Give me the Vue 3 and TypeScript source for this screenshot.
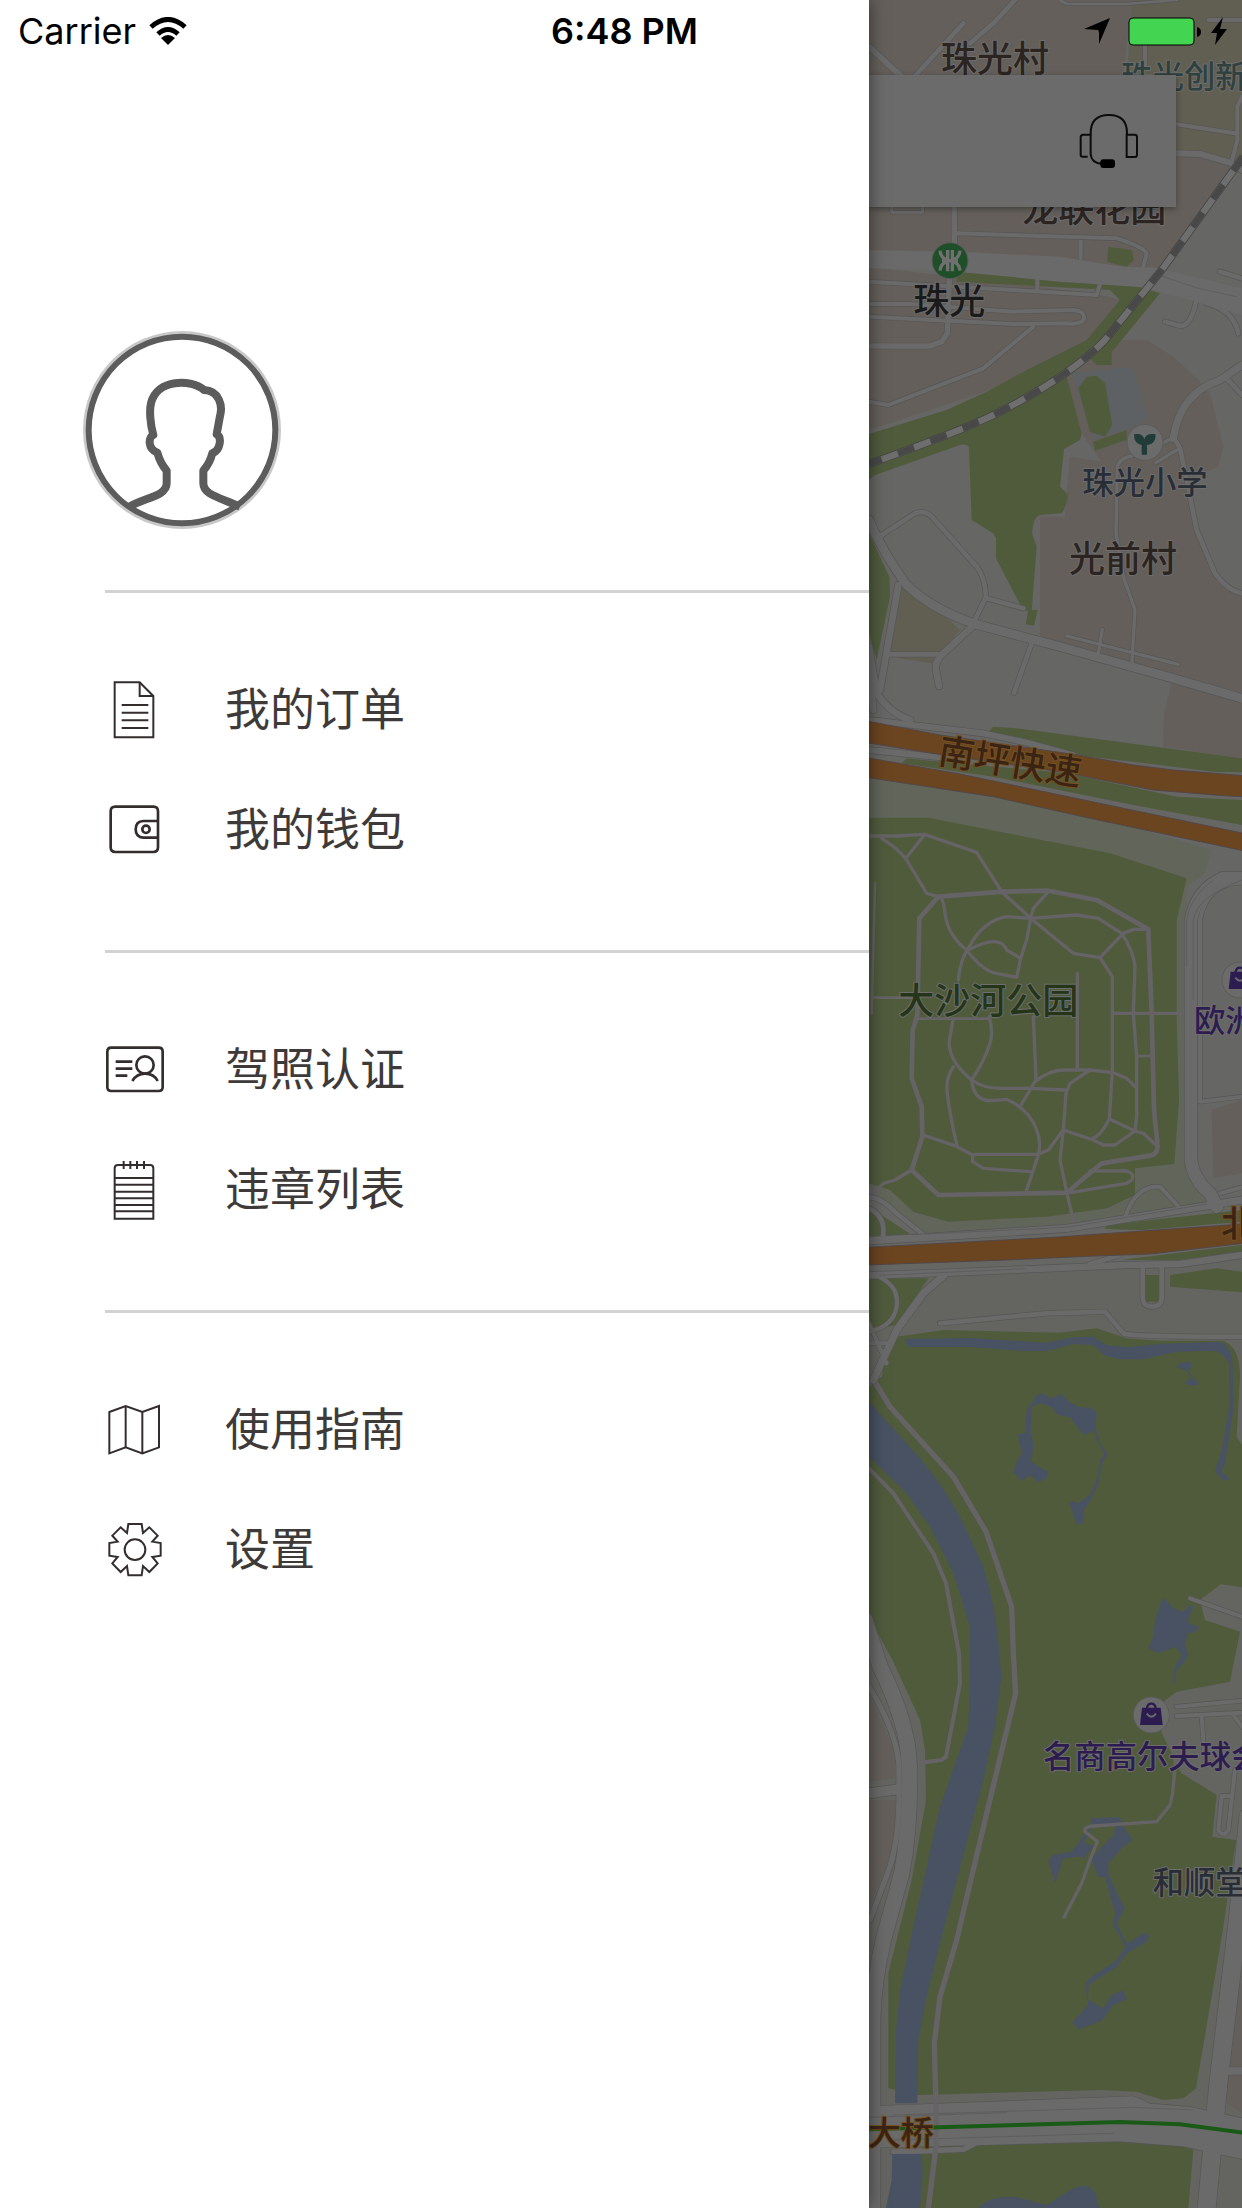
<script setup lang="ts">
interface Road {
  w: number
  d: string
}

interface Label {
  text: string
  x: number
  y: number
  kind: string
  turn?: string
}

interface MenuItem {
  label: string
  icon: string[]
  weight: number
}

const menu: MenuItem[][] = [
  [
    {
      label: '我的订单',
      weight: 6,
      icon: ['M32 7H107L148 48V172H32Z', 'M107 7V48H148', 'M53 75H133M53 98H133M53 121H133M53 144H133'],
    },
    {
      label: '我的钱包',
      weight: 8,
      icon: [
        'M34 20H148Q162 20 162 34V142Q162 156 148 156H34Q20 156 20 142V34Q20 20 34 20Z',
        'M162 63H118Q95 64 95 88Q95 112 118 113H162',
        'M126 77A11 11 0 1 1 126 99A11 11 0 1 1 126 77Z',
      ],
    },
  ],
  [
    {
      label: '驾照认证',
      weight: 8,
      icon: [
        'M22 23H164Q176 23 176 35V141Q176 153 164 153H22Q10 153 10 141V35Q10 23 22 23Z',
        'M35 65H85M35 86H85M35 107H70',
        'M123 49A26 26 0 1 1 123 101A26 26 0 1 1 123 49Z',
        'M85 123Q98 101 123 101Q150 101 161 123',
      ],
    },
    {
      label: '违章列表',
      weight: 6,
      icon: [
        'M42 15H138Q148 15 148 25V176H32V25Q32 15 42 15Z',
        'M32 54H148M32 74H148M32 95H148M32 115H148M32 135H148M32 154H148',
        'M59 3V27M79 3V27M99 3V27M120 3V27',
      ],
    },
  ],
  [
    {
      label: '使用指南',
      weight: 6,
      icon: ['M16 36L65 18L115 36L165 18V142L115 160L65 142L16 160Z', 'M65 18V142M115 36V160'],
    },
    {
      label: '设置',
      weight: 6,
      icon: [
        'M73 12H113L117 39L136 22L161 47L145 65L170 69V107L145 111L161 130L136 156L117 138L113 166H73L69 138L50 156L25 130L41 111L16 107V69L41 65L25 47L50 22L69 39Z',
        'M93 58A31 31 0 1 1 93 120A31 31 0 1 1 93 58Z',
      ],
    },
  ],
]

const roads: Road[] = [
  { w: 14, d: 'M465 0L400 70L330 130M310 70L165 228' },
  { w: 18, d: 'M27 140L125 230' },
  { w: 8, d: 'M600 0L620 12H800L950 0M95 620V637H188V620' },
  { w: 12, d: 'M855 135V200M1045 60H1146M945 372L1125 400M1146 290L1132 320V420L1115 485' },
  { w: 18, d: 'M940 460L1020 462L1110 488L1146 510' },
  { w: 16, d: 'M283 615V760M268 840L262 1000L245 1025L210 1038H27' },
  { w: 12, d: 'M290 700L770 715Q850 740 860 760L850 800M662 715V775M532 820V870M27 845L290 860L710 885L722 845' },
  { w: 12, d: 'M27 912H150L460 935L640 930Q680 935 670 960Q655 975 620 970L460 972L27 950M520 980L370 1105L85 1215L27 1205' },
  { w: 14, d: 'M1008 905Q990 990 950 975L915 965M1080 815L1146 835M1040 910Q1120 930 1135 1000' },
  { w: 14, d: 'M65 1605L165 1540Q195 1530 215 1550L350 1700Q375 1730 378 1790L340 1870M380 1795L490 1825M85 1963H245M515 1930L462 2078' },
  { w: 20, d: 'M345 1872L245 1965Q225 1985 228 2010L237 2058M115 1755L60 2070' },
  { w: 20, d: 'M27 1940L50 2080Q90 2140 150 2160M27 2000L40 2130' },
  { w: 26, d: 'M27 1560Q70 1660 140 1755Q220 1830 345 1872L600 1940L940 2035L1146 2095' },
  { w: 10, d: 'M620 1908L955 1993M727 1888L715 1960M815 2000L825 1830L790 1730L768 1600L772 1400Q780 1370 830 1365L945 1312M888 1388L950 1350' },
  { w: 14, d: 'M940 1310L960 1345L980 1440L1010 1590L1065 1720Q1100 1770 1146 1780M1100 1135L1146 1185' },
  { w: 22, d: 'M940 1315Q960 1180 1080 1140L1146 1095' },
  { w: 18, d: 'M27 2160L370 2200L500 2228L640 2266M27 2250L240 2272' },
  { w: 38, d: 'M1146 2634H1090Q1010 2670 993 2760V3480Q1000 3540 1050 3580L1070 3620' },
  { w: 12, d: 'M1146 2648Q1040 2650 1020 2760V3305L1146 3290' },
  { w: 12, d: 'M795 3655Q820 3570 880 3560H900L960 3625M1080 3580L1146 3562' },
  { w: 22, d: 'M27 3722L200 3712L620 3685L1146 3600' },
  { w: 14, d: 'M27 3592Q60 3590 110 3640L200 3712M27 3625Q80 3650 68 3715' },
  { w: 20, d: 'M27 3826L260 3818L800 3795L960 3792L1146 3765' },
  { w: 14, d: 'M690 3792L780 3765M848 3797V3895Q850 3920 875 3920Q905 3920 905 3895V3797M240 3970L560 3940L735 3935L790 4000Q810 4010 1146 4010' },
  { w: 12, d: 'M60 3832Q118 3860 110 3920Q100 3980 27 3995M27 3970L80 4090M27 4030H80' },
  { w: 22, d: 'M250 3828L190 3880L110 3990L40 4140' },
  { w: 12, d: 'M990 4795L1060 4820L1146 4850M950 5120L1146 5102M950 5148L1146 5138M1025 5148L1033 5260M1120 5145L1146 5180M1125 5310L1105 5490Q1090 5515 1075 5490L1085 5388H1110' },
  { w: 30, d: 'M27 5380L130 5366' },
  { w: 16, d: 'M27 5060Q112 5200 117 5300V5400Q115 5520 90 5600L30 5760' },
  { w: 46, d: 'M15 4860L60 5000Q145 5170 148 5300Q152 5480 125 5620L70 5820Q40 5950 38 6060V6624' },
  { w: 54, d: 'M1165 5450L1130 5790L1075 6250L1040 6624' },
  { w: 22, d: 'M1146 6213H1100M27 6330L820 6300Q850 6310 900 6345' },
  { w: 120, d: 'M27 6383L400 6374L780 6364L980 6380L1165 6420' },
  { w: 16, d: 'M100 6456L310 6448L350 6428' },
]

const trails: Road[] = [
  { w: 10, d: 'M27 2508H110L193 2503L350 2557L425 2675L512 2755L640 2860L720 2873L790 2800L822 2788H865' },
  { w: 10, d: 'M65 2515Q120 2550 140 2580L200 2680L235 2690M193 2505L140 2572' },
  { w: 14, d: 'M235 2690L430 2675L565 2672L710 2700L865 2788L875 3040L882 3330L893 3440Q890 3465 870 3467L725 3490L620 3578L235 3585L155 3510L187 3410L185 3320L155 3235L158 3090L172 3045L178 2755Z' },
  { w: 10, d: 'M235 2690Q250 2690 255 2740Q265 2810 320 2850Q370 2915 410 2920L470 2932L482 2875L500 2820L512 2755L520 2725L565 2675' },
  { w: 10, d: 'M295 2940Q300 2880 325 2845Q370 2760 440 2750L512 2755L650 2745L715 2755L785 2800Q820 2850 825 2900L820 3040L830 3170V3350L825 3393' },
  { w: 10, d: 'M325 2850Q420 2800 440 2850L482 2875M720 2873L757 2930V3210L748 3358Q720 3410 695 3417M757 3040H975M652 2920V3210' },
  { w: 8, d: 'M45 2650L35 3040M40 2993H170M172 3056H385M830 3168H870' },
  { w: 10, d: 'M280 3056L268 3120Q262 3180 335 3240Q370 3265 420 3265L510 3265L615 3270' },
  { w: 10, d: 'M388 3050Q400 3100 390 3130Q375 3180 335 3240Q340 3300 390 3302L440 3298Q510 3330 530 3390Q545 3430 535 3465L500 3570' },
  { w: 10, d: 'M520 3050L528 3240M483 3315L525 3245Q570 3210 610 3210L690 3210L760 3218L800 3235L825 3260' },
  { w: 10, d: 'M690 3210L630 3250L618 3280L610 3390L565 3450L535 3463H340M280 3200Q255 3240 262 3280Q270 3350 292 3440' },
  { w: 10, d: 'M190 3405L292 3440L338 3465V3485L370 3505L510 3515M610 3390L600 3480L620 3575L642 3670' },
  { w: 10, d: 'M610 3390L700 3420L730 3435H765L825 3393L750 3358M825 3393L850 3400L893 3440' },
  { w: 10, d: 'M690 3513H800Q825 3520 815 3540L800 3550L630 3578M155 3510L105 3540L70 3550L35 3585' },
  { w: 16, d: 'M35 4130L90 4220L280 4430L378 4595L455 4820L460 4960L467 5080L380 5440L290 5820L240 5990L223 6130L228 6320V6440L205 6624' },
  { w: 12, d: 'M27 4405L100 4480L220 4660L258 4750L297 4960L300 5050L258 5270L245 5280L170 5290' },
  { w: 10, d: 'M945 5148V5300L938 5380L930 5415L890 5465L700 5478Q670 5480 675 5495L712 5525L690 5580L665 5650L612 5752' },
]

const labels: Label[] = [
  { text: '珠光村', x: 243, y: 215, kind: 'large brown' },
  { text: '珠光创新', x: 784, y: 264, kind: 'small teal' },
  { text: '龙联花园', x: 487, y: 667, kind: 'large brown' },
  { text: '珠光', x: 160, y: 943, kind: 'large black' },
  { text: '珠光小学', x: 667, y: 1483, kind: 'small slate' },
  { text: '光前村', x: 627, y: 1715, kind: 'large brown' },
  { text: '南坪快速', x: 231, y: 2290, kind: 'large amber', turn: 'rotate(9 231 2290)' },
  { text: '大沙河公园', x: 115, y: 3042, kind: 'large forest' },
  { text: '欧洲城', x: 1002, y: 3095, kind: 'small violet' },
  { text: '北环大道', x: 1083, y: 3711, kind: 'large amber' },
  { text: '名商高尔夫球会', x: 549, y: 5303, kind: 'small violet' },
  { text: '和顺堂', x: 878, y: 5682, kind: 'small slate' },
  { text: '大桥', x: 23, y: 6436, kind: 'bridge amber' },
]
</script>

<template>
  <div class="app">
    <header class="status">
      <div class="carrier">
        <span>Carrier</span>
        <svg class="wifi" viewBox="0 0 38 28" aria-hidden="true">
          <path d="M2 10Q19 -5 36 10" stroke-width="5" />
          <path d="M9 17Q19 8 29 17" stroke-width="5" />
          <path class="solid" d="M19 28L12 21Q19 15 26 21Z" />
        </svg>
      </div>
      <time class="clock">6:48 PM</time>
      <div class="indicators">
        <svg class="arrow" viewBox="0 0 26 26" aria-hidden="true"><path d="M26 0L15 26V14L14 12L0 11Z" /></svg>
        <svg class="battery" viewBox="0 0 73 29" aria-hidden="true">
          <rect x="1" y="1" width="65" height="27" rx="4" fill="#43d552" stroke="#000" stroke-width="1" />
          <path d="M69 10Q73 11 73 15Q73 19 69 20Z" />
        </svg>
        <svg class="bolt" viewBox="0 0 16 28" aria-hidden="true"><path d="M12 0L0 16H6L4 28L16 12H9Z" /></svg>
      </div>
    </header>

    <aside class="drawer">
      <div class="profile">
        <svg class="avatar" viewBox="69 63 594 594" role="img" aria-label="avatar">
          <circle cx="366" cy="360" r="297" fill="#c8c8c8" />
          <circle cx="366" cy="360" r="280" fill="#fff" stroke="#5c5c5c" stroke-width="18" />
          <path
            d="M205 592C250 563 320 560 320 520V482C305 465 298 450 292 428C262 415 265 382 280 375C270 340 268 300 273 280C290 205 395 207 432 240C480 242 488 290 480 318L470 373C486 382 482 420 457 430C452 450 445 465 430 482V520C430 555 480 562 540 590"
            fill="none"
            stroke="#5c5c5c"
            stroke-width="24"
            stroke-linejoin="round"
          />
        </svg>
      </div>
      <nav>
        <ul v-for="(group, g) in menu" :key="g" class="group">
          <li v-for="item in group" :key="item.label">
            <a href="#" class="item">
              <svg class="icon" viewBox="0 0 180 180" :stroke-width="item.weight" aria-hidden="true">
                <path v-for="(d, i) in item.icon" :key="i" :d="d" />
              </svg>
              <span>{{ item.label }}</span>
            </a>
          </li>
        </ul>
      </nav>
    </aside>

    <main class="map-pane">
      <svg class="map" viewBox="27 0 1119 6624" preserveAspectRatio="xMinYMin slice">
        <rect x="27" width="1119" height="6624" fill="#666664" />
        <g fill="#645f5a">
          <path d="M27 0H815L790 225V450H950L1120 500L900 815L27 760Z" />
          <path d="M27 800L700 880L780 900L690 1020L600 1090L330 1190L27 1290Z" />
          <path d="M620 1130L715 1020H860L940 1070L1015 1140L1050 1180L1090 1340L1075 1400L980 1440L1000 1590L1065 1720L1146 1790V2275L910 2240L912 2140L935 2050L980 2035L540 1910V1550H615L630 1370L725 1385L665 1300Z" />
        </g>
        <path fill="#615f52" d="M815 0H1146V500L950 460L790 400Z" />
        <path fill="#615f52" d="M120 1760L200 1800L300 1890L215 1990L90 1970Z" />
        <path fill="#5d6163" d="M635 1120L820 1100L865 1255L800 1290L700 1320Z" />
        <path fill="#62655a" d="M27 2335L600 2420L1055 2550L1035 2620L980 2660L975 3500L1060 3620L800 3680L200 3710L27 3560Z" />
        <path fill="#646560" d="M27 3830L1146 3780V6624H27Z" />
        <g fill="#645f5a">
          <path d="M1055 3330L1146 3300V3520L1060 3535Z" />
          <path d="M27 5080L105 5260V5335L27 5345ZM27 5400H105Q110 5500 80 5600L27 5720Z" />
          <path d="M1135 5950H1146V6200H1105ZM1105 6225H1146V6340L1100 6310Z" />
        </g>

        <g fill="#505b3c">
          <path d="M290 815L530 820L750 845L835 860L900 880L785 1020L755 1055V1095H710L690 1075L620 1130L665 1300L660 1320L612 1347L600 1460L625 1485Q615 1530 605 1540L540 1545Q520 1550 516 1600L530 1640L515 1832H490L408 1675V1615L400 1600L335 1560L327 1345Q325 1330 300 1335L45 1425L27 1440V1302L260 1230L380 1175L500 1110L680 1020L780 900L750 870L290 845Z" />
          <path d="M655 1165L680 1130L710 1127L735 1150L757 1275L735 1310L690 1295ZM700 1325L800 1290V1320L705 1352ZM745 740L815 750L822 780L800 800L742 785Z" />
          <path d="M505 1830H533L522 1877L497 1873ZM27 1600L88 1730L90 1790L50 1980L27 1900Z" />
          <path d="M385 2195L400 2180L470 2185L1146 2275V2317L1060 2315L820 2285L640 2265Z" />
          <path d="M125 2290L140 2275L190 2280L620 2320L950 2390L1146 2400V2475L820 2415L400 2330Z" />
          <path d="M27 2453H205L750 2560L980 2635L950 2760V3060L957 3300L943 3492L825 3505V3585L740 3625L560 3650L265 3665L160 3635L90 3570L27 3550Z" />
          <path d="M740 3675L1146 3630V3665L850 3690L735 3687ZM27 3620L155 3705L27 3715ZM780 3780L1146 3735V3755L960 3780Z" />
          <path d="M27 3835H205L110 3975L27 3990ZM853 3825H900V3905H853ZM930 3825L1070 3805L1146 3815V3877L930 3860Z" />
          <path d="M110 4010L250 3990L600 3998L710 3985L800 4015L900 4022H1090Q1140 4040 1140 4130L1130 4310L1146 4335V4762L1082 4753L1020 4800L1035 4860L1140 4895L1110 5045L950 5075L905 5110V5200L965 5320L1070 5385L1057 5510L1128 5520L1087 5800L1008 6265L970 6295L910 6300L830 6275L720 6270L175 6285L85 6265V5920L110 5820L155 5640L198 5400L195 5250L180 5160L100 4985L27 4850V4160L65 4130L75 4070Z" />
          <path d="M185 6440L340 6435L720 6415L945 6405L1000 6450L985 6624H180Z" />
        </g>

        <g fill="#485263">
          <path d="M140 4017L330 4014L560 4028L640 4012L700 4010L740 4035L800 4042L900 4032L1080 4025Q1115 4040 1118 4090L1120 4230L1095 4390L1085 4415L1110 4437L1090 4442L1065 4412L1085 4350L1108 4220L1107 4090Q1095 4060 1060 4052L950 4055L850 4078H780L735 4067L700 4035L640 4032L560 4053H490L330 4041H150Q130 4030 140 4017Z" />
          <path d="M515 4208L530 4185L545 4180L575 4195L605 4182L630 4208L660 4222L695 4223L710 4240L707 4285L720 4330L743 4362L725 4390L715 4450L695 4495L672 4530L670 4570L650 4573L628 4510L640 4503L655 4510L690 4485L712 4430L720 4380L733 4362L710 4320L703 4292L670 4305L630 4252L595 4245L570 4218L540 4210L515 4220L512 4300L520 4330L515 4385L535 4400L563 4415L560 4435L535 4447L510 4425L485 4443L460 4415L470 4385L485 4360L473 4303L495 4300L500 4230Z" />
          <path d="M948 4100L965 4088L990 4085L995 4100L985 4110L1000 4135L1018 4153L990 4157L972 4148L995 4135L980 4112Z" />
          <path d="M27 4205L180 4375Q260 4470 310 4570L370 4700Q410 4830 418 4960L424 5030L405 5180L370 5340L242 5820L200 5990L175 6120L172 6310H105L108 6090L120 5970L158 5790L240 5420L325 5180L330 5030V4880L280 4720L210 4580L140 4480L27 4370Z" />
          <path d="M905 4800L915 4797L940 4825L970 4835L990 4815L1000 4820L985 4855V4870L1018 4880L1010 4893L985 4900L975 4930L985 4965L970 4990L950 5010L945 5050L938 5045L945 5000L965 4965L945 4940L895 4960L865 4945L880 4910L885 4860Z" />
          <path d="M695 5455L780 5452L790 5480L818 5520L785 5545L745 5590V5620L775 5690L795 5725L770 5770L795 5820L805 5830L850 5800L868 5805L860 5825L800 5860L770 5900L685 5955V6000L730 6025L755 5985L790 5970L800 5998L760 6015L725 6062L655 6088L637 6067L685 6015L675 5950L690 5935L770 5880L797 5840L760 5775L765 5740L735 5630H715L695 5580L660 5570L610 5575L585 5650L565 5580L580 5565L635 5555L690 5480Z" />
          <path d="M355 6624Q390 6585 470 6592L560 6615L640 6565Q690 6545 705 6580L718 6624Z" />
        </g>
        <path fill="#505b3c" d="M672 5525L700 5475L765 5478L762 5505L725 5540L690 5582L675 5570L700 5540Z" />

        <g fill="none" stroke-linejoin="round" stroke-linecap="round">
          <path v-for="(t, i) in trails" :key="'t' + i" :d="t.d" stroke="#656366" :stroke-width="t.w" />
          <path v-for="(r, i) in roads" :key="'c' + i" :d="r.d" stroke="#565656" :stroke-width="r.w + 4" />
          <path v-for="(r, i) in roads" :key="'r' + i" :d="r.d" stroke="#6a6a6a" :stroke-width="r.w" />
        </g>
        <path d="M27 750L330 757L600 770L790 800L890 803L1146 865V945L1010 905L850 862L600 845L290 815L27 805Z" fill="#6a6a6a" />
        <path
          d="M880 820L1015 865L1130 890M100 6345L820 6322L1000 6330M100 6420L760 6400M980 2900V2760Q990 2690 1060 2640M1000 3000V2760Q1010 2690 1146 2640M27 6352L440 6338M150 3704L620 3682L1040 3612M60 3826L500 3806"
          fill="none"
          stroke="#585858"
          stroke-width="2"
        />
        <path fill="#485263" d="M97 6462H185L188 6520L180 6624H78L95 6540Z" />
        <path fill="none" stroke="#656366" stroke-width="14" d="M228 6310V6440L205 6624" />

        <g fill="#6b4420" stroke="#524848" stroke-width="3">
          <path d="M20 2163L240 2205L640 2263L820 2295L940 2310L1150 2327V2390L1090 2387L880 2370L600 2315L230 2262L20 2228Z" />
          <path d="M20 2273L300 2322L600 2385L1150 2500V2552L700 2457L400 2390L20 2332Z" />
          <path d="M20 3742L580 3712L920 3688L1150 3672V3730L870 3762L700 3768L440 3780L20 3795Z" />
        </g>
        <path d="M20 6388L780 6366L960 6373L1150 6398" fill="none" stroke="#1a5a17" stroke-width="12" />

        <g fill="none">
          <path d="M1150 470L905 810L735 1020Q640 1120 440 1225Q340 1280 27 1392" stroke="#444" stroke-width="24" />
          <path d="M1150 470L905 810L735 1020Q640 1120 440 1225Q340 1280 27 1392" stroke="#6e6e6e" stroke-width="19" />
          <path d="M1150 470L905 810L735 1020Q640 1120 440 1225Q340 1280 27 1392" stroke="#484848" stroke-width="19" stroke-dasharray="52 52" />
        </g>

        <text v-for="l in labels" :key="l.text + l.y" :x="l.x" :y="l.y" :class="l.kind" :transform="l.turn">{{ l.text }}</text>

        <g stroke="#5b5b5b" stroke-width="3" fill="#6b6b6b">
          <circle cx="270" cy="782" r="54" fill="#1f4f28" />
          <circle cx="855" cy="1327" r="54" />
          <circle cx="1140" cy="2940" r="54" />
          <circle cx="874" cy="5145" r="54" />
        </g>
        <g fill="none" stroke="#707070" stroke-width="10">
          <path d="M240 752Q242 770 254 776Q262 782 254 788Q242 794 240 812M300 752Q298 770 286 776Q278 782 286 788Q298 794 300 812M263 750V814M277 750V814M246 782H294" />
        </g>
        <g fill="#203b38">
          <path d="M822 1303Q848 1298 853 1318Q858 1298 887 1303Q887 1335 861 1335V1364H845V1335Q822 1332 822 1303Z" />
        </g>
        <g v-for="p in [{ x: 874, y: 5145 }, { x: 1140, y: 2937 }]" :key="p.x" :transform="`translate(${p.x} ${p.y})`">
          <path d="M-28 -22H28L34 30H-34Z" fill="#2d1c50" />
          <path d="M-13 -20Q-12 -34 0 -34Q12 -34 13 -20" fill="none" stroke="#2d1c50" stroke-width="7" />
          <path d="M-14 -4Q0 14 14 -4" fill="none" stroke="#6b6b6b" stroke-width="6" />
        </g>
      </svg>

      <div class="card">
        <button type="button" class="support" aria-label="客服">
          <svg viewBox="657 336 180 174" aria-hidden="true">
            <g fill="none" stroke="#0c0c0c" stroke-width="6">
              <path d="M692 404V400Q692 345 747 345Q801 345 801 400V404" />
              <path d="M683 470H668Q662 470 662 464V412Q662 404 670 404H692V462Q694 490 725 491" />
              <path d="M800 404H824Q831 404 831 411V464Q831 471 824 471H800Z" />
            </g>
            <rect x="721" y="478" width="44" height="26" rx="9" />
          </svg>
        </button>
      </div>
    </main>
  </div>
</template>

<style>
body {
  margin: 0;
}
</style>

<style scoped>
.app {
  position: relative;
  display: flex;
  min-height: 100vh;
  overflow: hidden;
  background: #fff;
  font-family: Inter, "Noto Sans CJK SC", sans-serif;
}

.status {
  position: absolute;
  z-index: 3;
  top: 0;
  left: 0;
  right: 0;
  display: grid;
  grid-template-columns: 1fr auto 1fr;
  align-items: center;
  height: 62px;
  padding: 0 15px 0 18px;
  font-size: 36px;
  line-height: 62px;
  color: #000;
}

.carrier,
.indicators {
  display: flex;
  align-items: center;
  gap: 13px;
}

.indicators {
  justify-content: flex-end;
  gap: 10px;
}

.clock {
  padding-left: 4px;
  font-weight: 600;
}

.wifi {
  width: 38px;
  height: 28px;
  fill: none;
  stroke: #000;
}

.wifi .solid {
  fill: #000;
  stroke: none;
}

.arrow {
  width: 26px;
  height: 26px;
  margin-right: 8px;
}

.battery {
  width: 73px;
  height: 29px;
}

.bolt {
  width: 16px;
  height: 28px;
}

.drawer {
  position: relative;
  z-index: 2;
  flex: 0 0 70%;
  box-sizing: border-box;
  background: #fff;
  box-shadow: 0 0 16px rgba(0, 0, 0, 0.5);
}

.profile {
  padding: 331px 0 61px 83px;
}

.avatar {
  display: block;
  width: 198px;
  height: 198px;
}

.group {
  margin: 0 0 0 105px;
  padding: 57px 0 60px;
  border-top: 3px solid #d2d2d2;
  list-style: none;
}

.item {
  display: flex;
  align-items: center;
  gap: 61px;
  height: 120px;
  margin-left: -1px;
  color: #3e3a39;
  font-size: 45px;
  line-height: 60px;
  text-decoration: none;
}

.icon {
  width: 60px;
  height: 60px;
  fill: none;
  stroke: #332e2d;
}

.map-pane {
  position: relative;
  flex: 1;
  background: #646560;
}

.map {
  position: absolute;
  inset: 0;
  width: 100%;
  height: 100%;
}

.map text {
  font-family: "Noto Sans CJK SC", sans-serif;
  font-weight: 500;
  paint-order: stroke;
  stroke: #6d6d6d;
  stroke-width: 6px;
  stroke-linejoin: round;
}

.large {
  font-size: 108px;
}

.small {
  font-size: 94px;
}

.bridge {
  font-size: 99px;
}

.brown {
  fill: #2c2420;
}

.black {
  fill: #1a1a1a;
}

.teal {
  fill: #2f403e;
}

.slate {
  fill: #282d36;
}

.forest {
  fill: #243518;
}

.violet {
  fill: #2d1c50;
}

.map .amber {
  fill: #3b2413;
  stroke: #745222;
}

.card {
  position: absolute;
  top: 75px;
  left: 0;
  right: 66px;
  display: flex;
  align-items: center;
  justify-content: flex-end;
  box-sizing: border-box;
  height: 132px;
  padding-right: 37px;
  background: #6b6b6b;
  box-shadow: 0 2px 6px rgba(0, 0, 0, 0.35);
}

.support {
  width: 60px;
  height: 58px;
  padding: 0;
  border: 0;
  background: none;
}

.support svg {
  display: block;
  width: 60px;
  height: 58px;
}
</style>
